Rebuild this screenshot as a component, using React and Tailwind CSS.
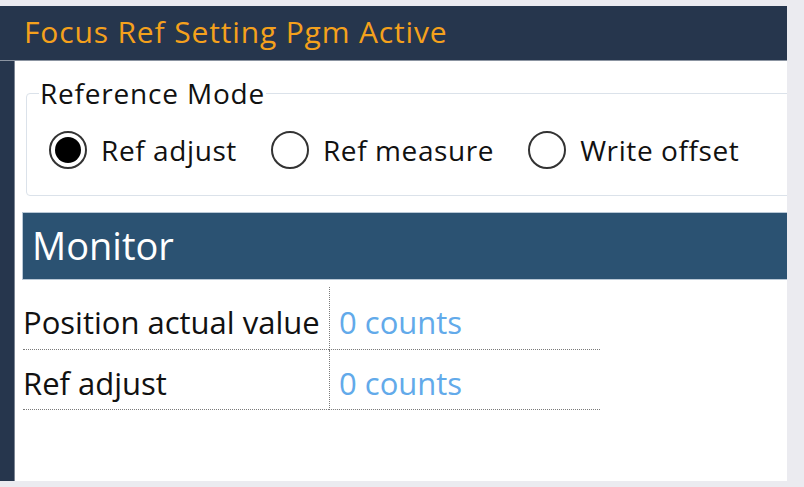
export default function App() {
  const modes = [
    { id: 'adjust', label: 'Ref adjust', checked: true },
    { id: 'measure', label: 'Ref measure', checked: false },
    { id: 'offset', label: 'Write offset', checked: false },
  ];

  const rows = [
    { name: 'Position actual value', value: '0 counts' },
    { name: 'Ref adjust', value: '0 counts' },
  ];

  return (
    <div className="w-[804px] h-[487px] bg-[#ebebf0] pt-[6px] overflow-hidden font-['Open_Sans','Noto_Sans',sans-serif]">
      <div className="w-[787px] h-[475px] bg-[#26364d] flex flex-col">
        {/* title bar */}
        <div className="h-[54px] shrink-0 pl-[24px] flex items-center text-[30px] text-[#f5a11c] tracking-[0.85px] leading-none pb-[3px]">
          Focus Ref Setting Pgm Active
        </div>

        <div className="flex-1 flex border-t border-[#8b94a1] min-h-0">
          <div className="w-[15px] shrink-0 border-r border-[#7c8593]" />

          <div className="flex-1 bg-white overflow-hidden min-w-0">
            {/* reference mode group */}
            <fieldset className="ml-[11px] mt-[14px] w-[800px] h-[121px] border border-[#dbe2ea] rounded-[4px] px-3">
              <legend className="text-[28px] text-[#111] leading-[36px] px-[1px] tracking-[0.8px]">Reference Mode</legend>
              <div className="flex items-center ml-[10px] mt-[20px] gap-[34px]">
                {modes.map((m) => (
                  <label key={m.id} className="flex items-center gap-[14px] text-[28px] leading-[38px] text-[#111] tracking-[0.6px]">
                    <span className="w-[38px] h-[38px] rounded-full border-2 border-[#333] flex items-center justify-center bg-white">
                      {m.checked && <span className="w-[26px] h-[26px] rounded-full bg-black" />}
                    </span>
                    {m.label}
                  </label>
                ))}
              </div>
            </fieldset>

            {/* monitor */}
            <div className="ml-[7px] mt-[16px] w-[790px] h-[68px] bg-[#2b5272] border border-[#b9c8d6] flex items-center pl-[9px]">
              <span className="text-[38px] text-white leading-none pb-[3px]">Monitor</span>
            </div>

            <div className="ml-[8px] mt-[7px] w-[577px] grid grid-cols-[306px_1fr]">
              {rows.map((r, i) => (
                <div key={i} className="contents">
                  <div className={`${i === 0 ? 'h-[63px]' : 'h-[60px]'} flex items-center border-b border-dotted border-[#7a7a7a] text-[31px] text-[#111] pt-[8px]`}>
                    {r.name}
                  </div>
                  <div className={`${i === 0 ? 'h-[63px]' : 'h-[60px]'} flex items-center border-b border-l border-dotted border-[#7a7a7a] pl-[9px] text-[31px] text-[#62aaea] pt-[8px]`}>
                    {r.value}
                  </div>
                </div>
              ))}
            </div>
          </div>
        </div>
      </div>
    </div>
  );
}
